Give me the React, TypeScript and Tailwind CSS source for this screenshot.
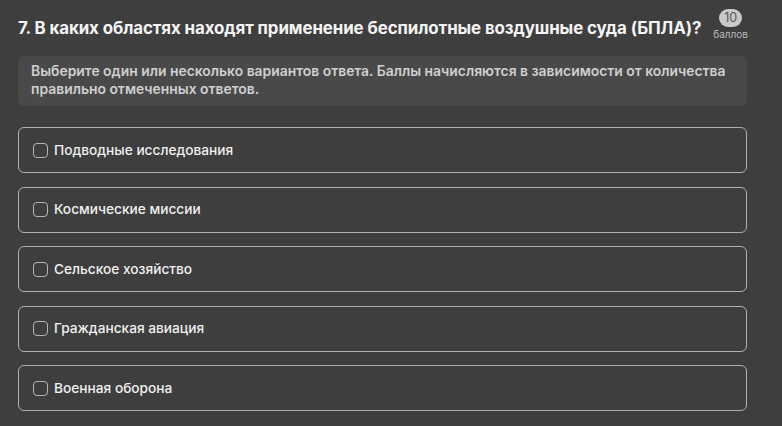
export default function App() {
  const options = [
    "Подводные исследования",
    "Космические миссии",
    "Сельское хозяйство",
    "Гражданская авиация",
    "Военная оборона",
  ];
  return (
    <div
      className="w-[782px] h-[426px] overflow-hidden bg-[#3e3e3e] text-white"
      style={{ fontFamily: "Inter, 'Noto Sans', sans-serif" }}
    >
      <div className="pl-[18px] pr-[35px] pt-[12px]">
        <div className="flex items-start justify-between">
          <h2 className="mt-[4px] whitespace-nowrap text-[16.9px] font-bold leading-[24px] tracking-[-0.1px] text-[#f4f4f4]">
            7. В каких областях находят применение беспилотные воздушные суда (БПЛА)?
          </h2>
          <div className="flex flex-col items-center -mt-[3px] mr-[-1px]">
            <span className="rounded-full bg-[#c9c9c9] px-[5px] text-[12.5px] leading-[18px] text-[#555]">
              10
            </span>
            <span className="text-[10px] leading-[14px] text-[#b9b9b9]">баллов</span>
          </div>
        </div>

        <div className="mt-[15px] rounded-[6px] bg-[#494949] px-[13px] pt-[6px] pb-[8px] text-[13.9px] font-semibold leading-[18px] text-[#cfcfcf]">
          <div className="whitespace-nowrap">
            Выберите один или несколько вариантов ответа. Баллы начисляются в зависимости от количества
          </div>
          <div>правильно отмеченных ответов.</div>
        </div>

        <div className="mt-[21px] flex flex-col gap-[13.5px]">
          {options.map((o) => (
            <label
              key={o}
              className="flex h-[46px] items-center gap-[6px] rounded-[6px] border border-[#b0b0b0] px-[14px]"
            >
              <span className="h-[15px] w-[15px] rounded-[4px] border border-[#b5b5b5]" />
              <span className="text-[13.7px] font-medium text-[#f0f0f0]">{o}</span>
            </label>
          ))}
        </div>
      </div>
    </div>
  );
}
